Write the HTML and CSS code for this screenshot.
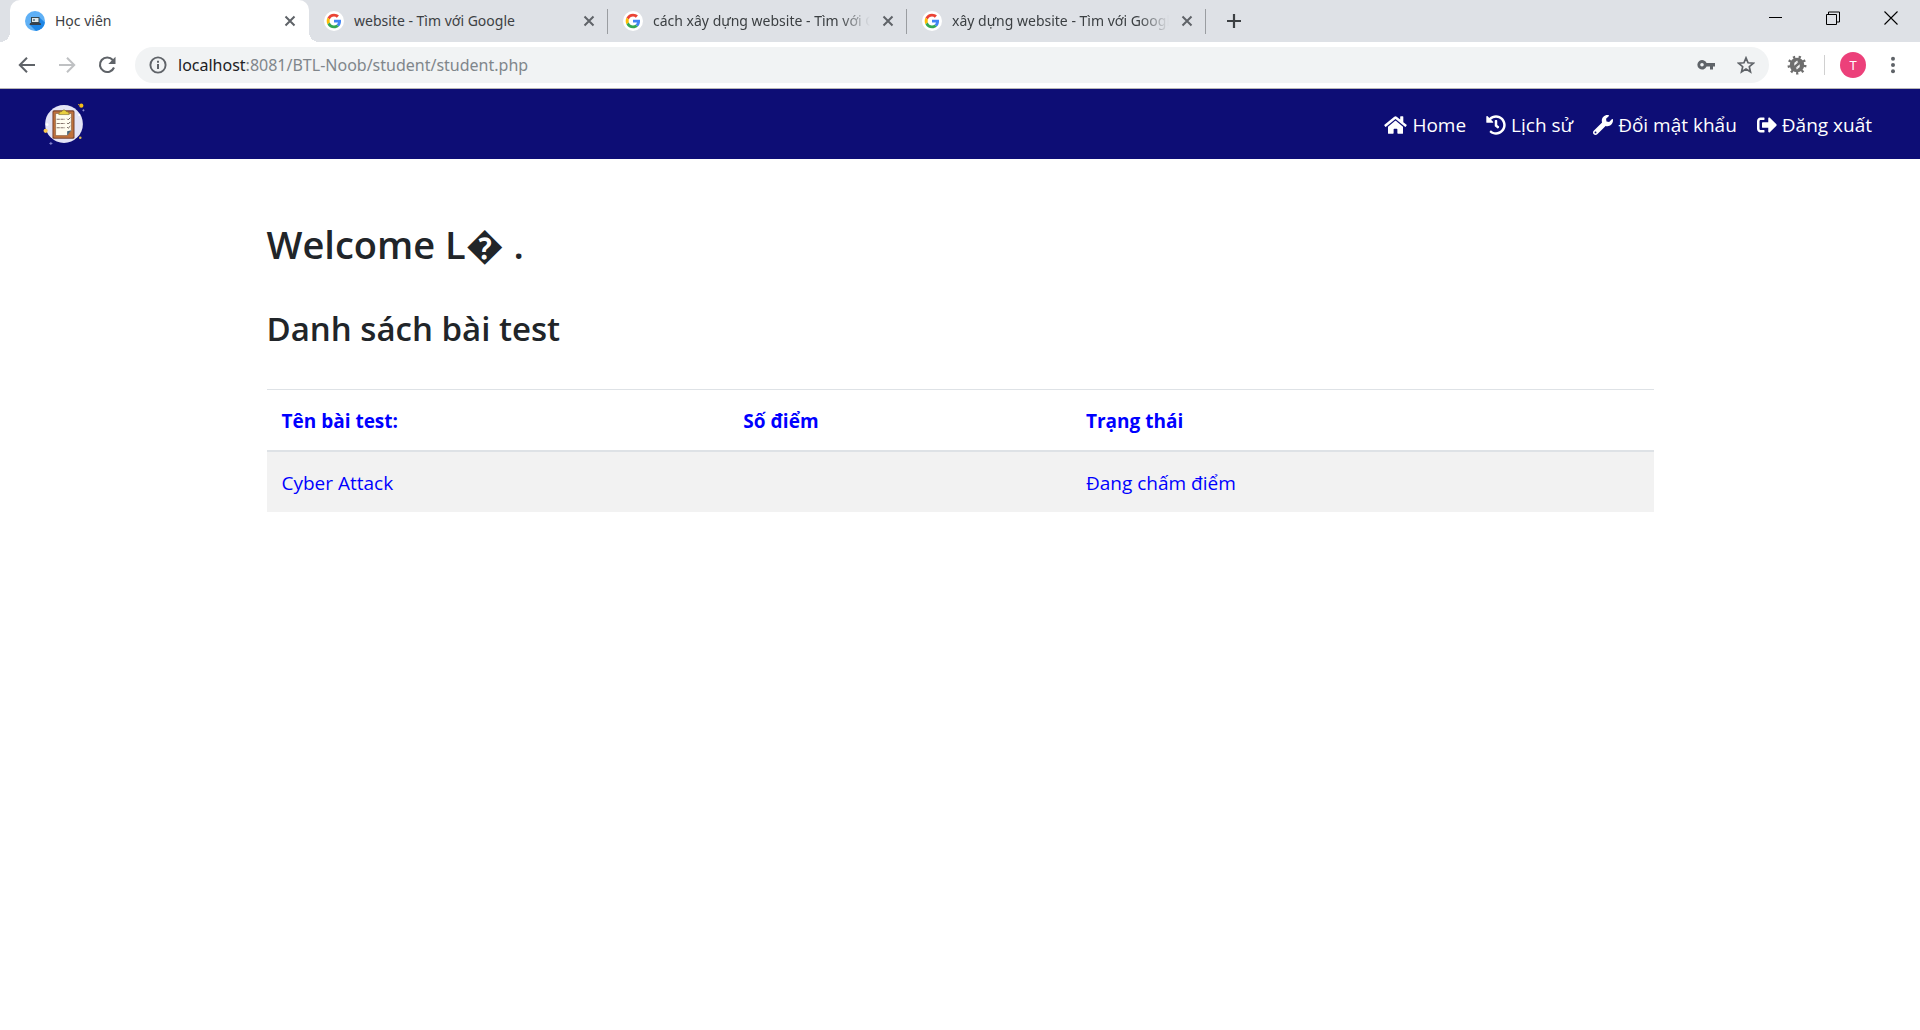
FILE: index.html
```html
<!DOCTYPE html>
<html lang="vi">
<head>
<meta charset="utf-8">
<meta name="viewport" content="width=device-width, initial-scale=1">
<title>Học viên</title>
<link rel="stylesheet" href="styles.css">
</head>
<body>
<svg class="defs" aria-hidden="true">
  <symbol id="google" viewBox="0 0 60 60">
    <circle cx="30" cy="30" r="30" fill="#fff"/>
    <g transform="translate(8 8) scale(.917)">
      <path fill="#ea4335" d="M24 9.500c3.540 0 6.710 1.220 9.210 3.600l6.850-6.850C35.900 2.380 30.470 0 24 0 14.620 0 6.510 5.380 2.560 13.220l7.980 6.190C12.430 13.720 17.740 9.500 24 9.500z"/>
      <path fill="#4285f4" d="M46.980 24.550c0-1.570-.15-3.090-.38-4.550H24v9.020h12.940c-.58 2.960-2.260 5.480-4.780 7.180l7.730 6c4.510-4.180 7.090-10.360 7.090-17.650z"/>
      <path fill="#fbbc05" d="M10.530 28.590c-.48-1.450-.76-2.990-.76-4.590s.27-3.140.76-4.590l-7.980-6.190C.92 16.460 0 20.120 0 24c0 3.880.92 7.540 2.560 10.780l7.970-6.190z"/>
      <path fill="#34a853" d="M24 48c6.480 0 11.930-2.130 15.890-5.810l-7.730-6c-2.150 1.450-4.920 2.300-8.160 2.300-6.260 0-11.570-4.220-13.470-9.910l-7.980 6.190C6.510 42.620 14.620 48 24 48z"/>
    </g>
  </symbol>
  <symbol id="cross" viewBox="0 0 12 12">
    <path d="M1.500 1.500l9 9m0-9l-9 9" stroke="currentColor" stroke-width="2" fill="none"/>
  </symbol>
</svg>

<header class="browser">
  <div class="tabstrip">
    <div class="tab tab-active">
      <button class="tab-select" type="button">
        <svg class="favicon" viewBox="0 0 20 20" aria-hidden="true">
          <circle cx="10" cy="10" r="10" fill="#5fb0f5"/>
          <path d="M15 7l4.900 4.500A10 10 0 0 1 11 20l-6-6z" fill="#1e86e5"/>
          <path d="M6 6h8.500v6H6z" fill="#37474f"/>
          <path d="M7 7h6.500v4H7z" fill="#dfe8ea"/>
          <path d="M8 8h2v2H8z" fill="#78909c"/>
          <path d="M5 12h10.500l.5 2H4.500z" fill="#37404a"/>
        </svg>
        <span class="tab-title">Học viên</span>
      </button>
      <button class="tab-close" type="button" aria-label="Đóng"><svg><use href="#cross"/></svg></button>
    </div>
    <div class="tab">
      <button class="tab-select" type="button">
        <svg class="favicon" aria-hidden="true"><use href="#google"/></svg>
        <span class="tab-title">website - Tìm với Google</span>
      </button>
      <button class="tab-close" type="button" aria-label="Đóng"><svg><use href="#cross"/></svg></button>
    </div>
    <div class="tab">
      <button class="tab-select" type="button">
        <svg class="favicon" aria-hidden="true"><use href="#google"/></svg>
        <span class="tab-title tab-title-fade">cách xây dựng website - Tìm với Google</span>
      </button>
      <button class="tab-close" type="button" aria-label="Đóng"><svg><use href="#cross"/></svg></button>
    </div>
    <div class="tab">
      <button class="tab-select" type="button">
        <svg class="favicon" aria-hidden="true"><use href="#google"/></svg>
        <span class="tab-title tab-title-fade">xây dựng website - Tìm với Google</span>
      </button>
      <button class="tab-close" type="button" aria-label="Đóng"><svg><use href="#cross"/></svg></button>
    </div>
    <button class="new-tab" type="button" aria-label="Thẻ mới">
      <svg viewBox="0 0 16 16"><path d="M8 1v14M1 8h14" stroke="currentColor" stroke-width="2.200"/></svg>
    </button>
    <div class="window-controls">
      <button type="button" aria-label="Thu nhỏ"><svg viewBox="0 0 14 14"><path d="M1 6.500h13" stroke="#000"/></svg></button>
      <button type="button" aria-label="Khôi phục"><svg viewBox="0 0 14 14"><path d="M.5 3.500h10v10H.5zM2.500 3V1h11v10H11" fill="none" stroke="#000"/></svg></button>
      <button type="button" aria-label="Đóng cửa sổ"><svg viewBox="0 0 14 14"><path d="M.5 .5l13 13m0-13l-13 13" stroke="#000" stroke-width="1.100"/></svg></button>
    </div>
  </div>

  <div class="toolbar">
    <button class="tool" type="button" aria-label="Quay lại">
      <svg viewBox="0 0 18 18"><path d="M17 9H2M9 1.800L1.800 9 9 16.200" fill="none" stroke="#5f6368" stroke-width="2"/></svg>
    </button>
    <button class="tool" type="button" aria-label="Tiến tới">
      <svg viewBox="0 0 18 18"><path d="M1 9h15M9 1.800L16.200 9 9 16.200" fill="none" stroke="#bfc1c3" stroke-width="2"/></svg>
    </button>
    <button class="tool" type="button" aria-label="Tải lại">
      <svg viewBox="0 0 18 18"><path d="M14.800 4A7.300 7.300 0 1 0 16 11.500" fill="none" stroke="#5f6368" stroke-width="2.100"/><path d="M17.500 .8v7.200h-7.200z" fill="#5f6368"/></svg>
    </button>
    <div class="omnibox">
      <svg class="info" viewBox="0 0 18 18" aria-hidden="true"><circle cx="9" cy="9" r="7.600" fill="none" stroke="#5f6368" stroke-width="1.900"/><path d="M8 8h2v5H8zM8 4.800h2v2H8z" fill="#5f6368"/></svg>
      <div class="address" role="textbox" aria-label="Địa chỉ" contenteditable="true" spellcheck="false"><span class="host">localhost</span>:8081/BTL-Noob/student/student.php</div>
      <button type="button" aria-label="Mật khẩu">
        <svg viewBox="0 0 18 18"><path d="M9.600 7A4.800 4.800 0 1 0 9.600 10.600H13v3h3v-3h2V7zM5 10.600a1.800 1.800 0 1 1 0-3.600 1.800 1.800 0 0 1 0 3.600z" fill="#5f6368"/></svg>
      </button>
      <button type="button" aria-label="Đánh dấu trang">
        <svg viewBox="0 0 18 18"><path d="M9 1.900l2.050 4.900 5.250.45-4 3.450 1.200 5.150L9 13.100l-4.500 2.750 1.200-5.150-4-3.450 5.250-.45z" fill="none" stroke="#5f6368" stroke-width="1.700"/></svg>
      </button>
    </div>
    <button class="extension" type="button" aria-label="Tiện ích">
      <svg viewBox="0 0 20 20"><g fill="none" stroke="#6e6e6e"><circle cx="10" cy="10" r="8" stroke-width="3" stroke-dasharray="2.200 3.380"/><circle cx="10" cy="10" r="5" stroke-width="4.500"/><path d="M4.500 14.500l11-9" stroke-width="2.500"/></g><path d="M7.500 8.500l3-2.500M9.500 14l3-2.500" stroke="#eee" stroke-width="1.200"/></svg>
    </button>
    <button class="avatar" type="button">T</button>
    <button class="menu" type="button" aria-label="Trình đơn">
      <svg viewBox="0 0 18 18" fill="#5f6368"><circle cx="9" cy="2.800" r="2"/><circle cx="9" cy="9" r="2"/><circle cx="9" cy="15.200" r="2"/></svg>
    </button>
  </div>
</header>

<nav class="navbar">
  <a class="brand" href="#" aria-label="Trang chủ">
    <svg viewBox="0 0 40 40" aria-hidden="true">
      <circle cx="20" cy="20" r="18" fill="#e4e4f6"/>
      <rect x="9" y="7" width="21" height="27" rx="1.500" fill="#7a4530"/>
      <rect x="10" y="8" width="19" height="25" rx="1" fill="#bf713a"/>
      <path d="M12 10h15v16l-4 5H12z" fill="#fffdf0" stroke="#75503a" stroke-width=".5"/>
      <path d="M23 31v-4l4-1z" fill="#496779"/>
      <path d="M15 11q0-3 3-3 2-3 4 0 3 0 3 3z" fill="#e9cf3f" stroke="#80702c" stroke-width=".6"/>
      <path d="M13 15.500h8M13 19.500h8M13 23.500h8" stroke="#87756d" stroke-width="1" stroke-dasharray="3 .7"/>
      <path d="M23 15l1 1 2-2M23 19l1 1 2-2M23 23l1 1 2-2" stroke="#62534b" stroke-width=".9" fill="none"/>
      <circle cx="36.500" cy="2.500" r="2" fill="#f4bd18"/><circle cx="34" cy="1.500" r=".6" fill="#f4bd18"/>
      <circle cx="2.500" cy="26.500" r="2" fill="#fac84d"/><circle cx="35.500" cy="33" r="1.200" fill="#d9b94e"/>
      <path d="M38.500 6v2m-1-1h2M7.500 37v3m-1.500-1.500h3" stroke="#9291d9" stroke-width=".8"/>
      <circle cx="4" cy="20.500" r="1.300" fill="#fff"/><circle cx="34.500" cy="11.500" r="1" fill="#fff"/>
    </svg>
  </a>
  <div class="nav-links">
    <a href="#"><svg class="wide" viewBox="0 0 576 512" aria-hidden="true"><path d="M280.370 148.260L96 300.110V464a16 16 0 0 0 16 16l112.060-.29a16 16 0 0 0 15.920-16V368a16 16 0 0 1 16-16h64a16 16 0 0 1 16 16v95.640a16 16 0 0 0 16 16.050L464 480a16 16 0 0 0 16-16V300L295.670 148.260a12.190 12.190 0 0 0-15.300 0zM571.600 251.470L488 182.560V44.050a12 12 0 0 0-12-12h-56a12 12 0 0 0-12 12v72.610L318.470 43a48 48 0 0 0-61 0L4.340 251.470a12 12 0 0 0-1.600 16.900l25.500 31A12 12 0 0 0 45.150 301l235.220-193.740a12.190 12.190 0 0 1 15.300 0L530.900 301a12 12 0 0 0 16.900-1.600l25.500-31a12 12 0 0 0-1.700-16.930z"/></svg>Home</a>
    <a href="#"><svg viewBox="0 0 512 512" aria-hidden="true"><path d="M504 255.531c.253 136.640-111.180 248.372-247.820 248.468-59.015.042-113.223-20.530-155.822-54.911-11.077-8.940-11.905-25.541-1.839-35.607l11.267-11.267c8.609-8.609 22.353-9.551 31.891-1.984C173.062 425.135 212.781 440 256 440c101.705 0 184-82.311 184-184 0-101.705-82.311-184-184-184-48.814 0-93.149 18.969-126.068 49.932l50.754 50.754c10.080 10.080 2.941 27.314-11.313 27.314H24c-8.837 0-16-7.163-16-16V38.627c0-14.254 17.234-21.393 27.314-11.314l49.372 49.372C129.209 34.136 189.552 8 256 8c136.810 0 247.747 110.780 248 247.531zm-180.912 78.784l9.823-12.630c8.138-10.463 6.253-25.542-4.210-33.679L288 256.349V152c0-13.255-10.745-24-24-24h-16c-13.255 0-24 10.745-24 24v135.651l65.409 50.874c10.463 8.137 25.541 6.253 33.679-4.210z"/></svg>Lịch sử</a>
    <a href="#"><svg viewBox="0 0 512 512" aria-hidden="true"><path d="M507.730 109.100c-2.240-9.030-13.540-12.090-20.120-5.510l-74.360 74.360-67.880-11.310-11.310-67.880 74.360-74.360c6.620-6.620 3.430-17.900-5.660-20.160-47.380-11.740-99.550.91-136.580 37.930-39.640 39.640-50.550 97.100-34.050 147.200L18.740 402.760c-24.990 24.990-24.990 65.510 0 90.500 24.990 24.990 65.510 24.990 90.500 0l213.210-213.210c50.120 16.710 107.470 5.680 147.370-34.220 37.070-37.070 49.700-89.320 37.910-136.730zM64 472c-13.250 0-24-10.750-24-24 0-13.260 10.750-24 24-24s24 10.740 24 24c0 13.250-10.750 24-24 24z"/></svg>Đổi mật khẩu</a>
    <a href="#"><svg viewBox="0 0 512 512" aria-hidden="true"><path d="M497 273L329 441c-15 15-41 4.500-41-17v-96H152c-13.300 0-24-10.700-24-24v-96c0-13.300 10.700-24 24-24h136V88c0-21.400 25.900-32 41-17l168 168c9.300 9.400 9.300 24.600 0 34zM192 436v-40c0-6.600-5.400-12-12-12H96c-17.700 0-32-14.300-32-32V160c0-17.700 14.300-32 32-32h84c6.600 0 12-5.400 12-12V76c0-6.600-5.400-12-12-12H96c-53 0-96 43-96 96v192c0 53 43 96 96 96h84c6.600 0 12-5.400 12-12z"/></svg>Đăng xuất</a>
  </div>
</nav>

<main class="container">
  <h1>Welcome L� .</h1>
  <h2>Danh sách bài test</h2>
  <table class="tests">
    <colgroup><col class="col-name"><col class="col-score"><col></colgroup>
    <thead>
      <tr><th scope="col">Tên bài test:</th><th scope="col">Số điểm</th><th scope="col">Trạng thái</th></tr>
    </thead>
    <tbody>
      <tr><td>Cyber Attack</td><td></td><td>Đang chấm điểm</td></tr>
    </tbody>
  </table>
</main>
</body>
</html>
```
FILE: styles.css
```css
* {
  box-sizing: border-box;
}

body {
  margin: 0;
  background: #fff;
  color: #212529;
  font-family: "Open Sans", "Noto Sans", sans-serif;
  font-size: 19px;
  line-height: 30px;
}

button {
  margin: 0;
  padding: 0;
  border: 0;
  background: none;
  color: inherit;
  font: inherit;
}

svg {
  display: block;
  flex: none;
}

.defs {
  display: none;
}

/* Browser window */
.browser {
  border-bottom: 1px solid #b6b4b6;
  font-family: "Noto Sans", "Open Sans", sans-serif;
}

.tabstrip {
  display: flex;
  height: 42px;
  padding-left: 10px;
  background: #dee1e6;
  color: #3c4043;
  font-size: 14px;
  line-height: 20px;
}

.tab {
  position: relative;
  display: flex;
  align-items: center;
  flex: 0 1 299px;
  min-width: 0;
  padding: 0 13px 0 15px;
}

.tab + .tab::after {
  content: "";
  position: absolute;
  right: 0;
  top: 9px;
  width: 1px;
  height: 25px;
  background: #9a9da1;
}

.tab-active {
  border-radius: 10px 10px 0 0;
  background: #fff;
}

.tab-active::before,
.tab-active::after {
  content: "";
  position: absolute;
  bottom: 0;
  width: 10px;
  height: 10px;
}

.tab-active::before {
  right: 100%;
  background: radial-gradient(circle at 0 0, #dee1e6 10px, #fff 10px);
}

.tab-active::after {
  left: 100%;
  background: radial-gradient(circle at 100% 0, #dee1e6 10px, #fff 10px);
}

.tab-select {
  display: flex;
  align-items: center;
  gap: 10px;
  flex: 1;
  min-width: 0;
  text-align: left;
}

.favicon {
  width: 20px;
  height: 20px;
}

.tab-title {
  flex: 1;
  min-width: 0;
  overflow: hidden;
  white-space: nowrap;
}

.tab-title-fade {
  -webkit-mask-image: linear-gradient(to left, transparent, #000 30px);
  mask-image: linear-gradient(to left, transparent, #000 30px);
}

.tab-close {
  padding: 4px 0 4px 12px;
  color: #5f6368;
}

.tab-close svg {
  width: 12px;
  height: 12px;
}

.new-tab {
  padding: 0 20px;
  color: #3c4043;
}

.new-tab svg {
  width: 16px;
  height: 16px;
}

.window-controls {
  display: flex;
  height: 36px;
  margin-left: auto;
}

.window-controls button {
  padding: 0 22px;
}

.window-controls svg {
  width: 14px;
  height: 14px;
}

.toolbar {
  display: flex;
  align-items: center;
  height: 46px;
  padding: 0 18px;
}

.toolbar svg {
  width: 18px;
  height: 18px;
}

.tool {
  margin-right: 22px;
}

.omnibox {
  display: flex;
  align-items: center;
  flex: 1;
  gap: 22px;
  height: 36px;
  margin-left: -3px;
  padding: 0 14px;
  border-radius: 18px;
  background: #f1f3f4;
}

.address {
  flex: 1;
  margin-left: -11px;
  color: #80868b;
  font-size: 16px;
  white-space: nowrap;
  outline: none;
}

.host {
  color: #202124;
}

.toolbar .extension {
  padding: 4px 17px 4px 18px;
  border-right: 1px solid #d0d0d0;
  line-height: 0;
}

.toolbar .extension svg {
  width: 20px;
  height: 20px;
  margin: -4px 0;
}

.avatar {
  width: 26px;
  height: 26px;
  margin: 0 18px 0 15px;
  border-radius: 50%;
  background: #ec407a;
  color: #fff;
  font-size: 13px;
  line-height: 26px;
}

/* Site navigation */
.navbar {
  display: flex;
  align-items: center;
  justify-content: space-between;
  min-height: 70px;
  padding: 0 38px 0 43px;
  background: #0d0d75;
}

.brand svg {
  width: 42px;
  height: 42px;
}

.nav-links {
  display: flex;
  padding-top: 2px;
}

.nav-links a {
  display: flex;
  align-items: center;
  gap: 5px;
  padding: 10px;
  color: #fff;
  text-decoration: none;
  white-space: nowrap;
}

.nav-links svg {
  width: 20px;
  height: 20px;
  fill: currentColor;
}

.nav-links .wide {
  width: 23px;
}

/* Page content */
.container {
  max-width: 1427px;
  margin: 0 auto;
  padding: 61px 20px 40px;
}

h1,
h2 {
  margin: 0;
  font-weight: 600;
}

h1 {
  margin-bottom: 40px;
  font-size: 38px;
  line-height: 48px;
}

h2 {
  margin-bottom: 39px;
  font-size: 33px;
  line-height: 42px;
}

.tests {
  width: 100%;
  border-collapse: collapse;
  table-layout: fixed;
  color: #00f;
}

.col-name {
  width: 33.300%;
}

.col-score {
  width: 24.700%;
}

.tests th,
.tests td {
  padding: 16px 15px 14px;
  border-top: 1px solid #dee2e6;
  text-align: left;
}

.tests th {
  border-bottom: 2px solid #dee2e6;
  font-weight: 700;
}

.tests tbody tr {
  background: #f2f2f2;
}
```
